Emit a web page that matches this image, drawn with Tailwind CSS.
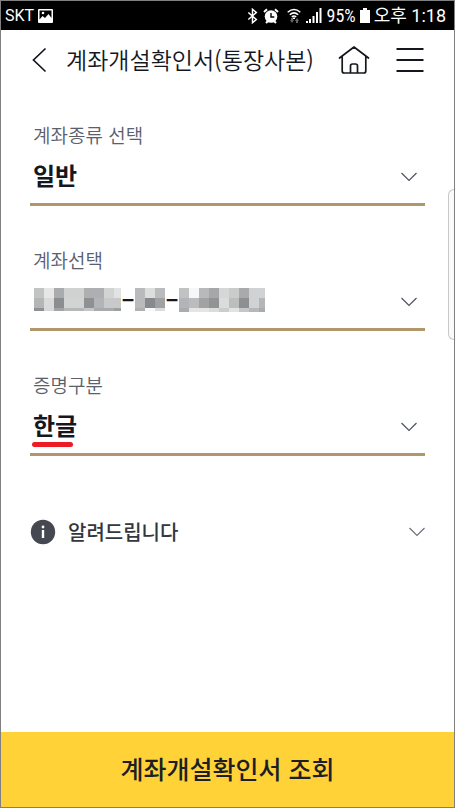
<!DOCTYPE html>
<html lang="ko">
<head>
<meta charset="utf-8">
<meta name="viewport" content="width=device-width, initial-scale=1">
<title>계좌개설확인서(통장사본)</title>
<script src="https://cdn.jsdelivr.net/npm/@tailwindcss/browser@4"></script>
</head>
<body class="bg-white font-['Noto_Sans_CJK_KR',sans-serif] text-[#15171e]">
<div class="relative flex min-h-screen flex-col border border-[#808080]">

  <!-- Status bar -->
  <div class="flex h-[29px] items-center bg-black pr-2 pl-1 font-[Roboto,'Noto_Sans_CJK_KR',sans-serif] text-white">
    <span class="text-[16px] leading-6">SKT</span>
    <svg class="ml-1 h-[14px] w-[15px]" viewBox="0 0 15 14" aria-hidden="true"><path fill="#fff" fill-rule="evenodd" d="M1 0h13a1 1 0 0 1 1 1v12a1 1 0 0 1-1 1H1a1 1 0 0 1-1-1V1a1 1 0 0 1 1-1zM1.500 1.500v9l3-3.500 2.500 2 3.500-4 3 4V1.500z"/><circle cx="5" cy="4" r="1.300" fill="#fff"/></svg>
    <div class="ml-auto flex items-center">
      <svg class="h-4 w-[11px]" viewBox="0 0 11 16" fill="none" stroke="#fff" stroke-width="1.500" aria-hidden="true"><path d="M1.300 4.500l8 7L5.500 14.700V1.300l3.800 3.200-8 7"/></svg>
      <svg class="ml-[5px] h-4 w-[16px]" viewBox="0 0 16 16" aria-hidden="true"><circle cx="8" cy="8.500" r="6.300" fill="#fff"/><path d="M1 4l3-2.700M15 4l-3-2.700M3 15l2-2M13 15l-2-2" stroke="#fff" stroke-width="2"/><path d="M8 5v4h3.300" fill="none" stroke="#000" stroke-width="1.400"/></svg>
      <svg class="ml-2 h-4 w-[14px]" viewBox="0 0 14 16" fill="none" stroke="#fff" stroke-width="1.500" aria-hidden="true"><path d="M.7 4.200Q7-1.200 13.300 4.200M2.800 6.700Q7 3 11.200 6.700M4.800 9Q7 7.200 9.200 9"/><path d="M7 9.500v1.500" stroke-width="2"/><path fill="#666" stroke="none" d="M3 12h1v-2h2v2h1l-2 3zM8 13l2-3 2 3h-1v2H9v-2z"/></svg>
      <svg class="ml-[5px] h-4 w-[16px]" viewBox="0 0 16 16" fill="#fff" aria-hidden="true"><path d="M0 13h2v2H0zM3 11h2v4H3zM6.500 8h2v7h-2zM10 4h2v11h-2zM13.500 0h2v15h-2z"/></svg>
      <span class="ml-[5px] font-['Roboto_Condensed',Roboto,sans-serif] text-[18px] leading-6">95%</span>
      <svg class="ml-1 h-[15px] w-[10px]" viewBox="0 0 10 15" fill="#fff" aria-hidden="true"><path d="M3 0h4v2h3v13H0V2h3z"/></svg>
      <span class="ml-1 text-[18px] leading-6">오후 1:18</span>
    </div>
  </div>

  <!-- Header -->
  <header class="flex h-[60px] items-center pr-[30px] pl-[30px]">
    <button type="button" aria-label="뒤로" class="flex h-8 w-[35px] shrink-0 items-center"><svg class="h-[26px] w-4" viewBox="0 0 16 26" fill="none" stroke="#15171e" stroke-width="1.700"><path d="M14.500 1.500L2.500 13l12 11.500"/></svg></button>
    <h1 class="pb-[2px] text-[23px] leading-8 font-[350] whitespace-nowrap">계좌개설확인서(통장사본)</h1>
    <a href="#" aria-label="홈" class="ml-auto"><svg class="h-[30px] w-8" viewBox="0 0 32 30" fill="none" stroke="#15171e" stroke-width="1.700" stroke-linejoin="round" stroke-linecap="round"><path d="M1.500 13L16 2l14.500 11M4.200 11.500V26a2 2 0 0 0 2 2h19.600a2 2 0 0 0 2-2V11.500M12.500 28v-7a2 2 0 0 1 2-2h3a2 2 0 0 1 2 2v7"/></svg></a>
    <button type="button" aria-label="메뉴" class="ml-[26px]"><svg class="block h-6 w-7" viewBox="0 0 28 24" fill="none" stroke="#15171e" stroke-width="2"><path d="M.5 1h27M.5 12h27M.5 23h27"/></svg></button>
  </header>

  <main class="flex flex-col gap-10 px-[29px] pt-[31px]">
    <div class="border-b-3 border-[#b0966a]">
      <label for="kind" class="block px-[3px] text-[19px] leading-7 font-[350] text-[#5a606c]">계좌종류 선택</label>
      <div class="relative flex h-[54px] items-center">
        <select id="kind" class="h-full w-full appearance-none bg-transparent px-[3px] pb-[2px] text-[24px] font-bold"><option>일반</option></select>
        <svg class="pointer-events-none absolute top-[23px] right-2 h-[10px] w-4" viewBox="0 0 16 10" fill="none" stroke="#4d535d" stroke-width="1.200"><path d="M.5 1L8 8.500 15.500 1"/></svg>
      </div>
    </div>

    <div class="border-b-3 border-[#b0966a]">
      <label for="account" class="block px-[3px] text-[19px] leading-7 font-[350] text-[#5a606c]">계좌선택</label>
      <div class="relative flex h-[54px] items-center px-[4px] pb-[2px]">
        <!-- Masked account number -->
        <svg class="h-6 w-[87px] shrink-0" viewBox="0 0 87 24" shape-rendering="crispEdges" aria-hidden="true">
          <path fill="#c2c3c3" d="M0 0h10v10H0z"/><path fill="#e6e6e6" d="M10 0h10v10H10z"/><path fill="#a9abac" d="M20 0h10v10H20z"/><path fill="#d0d2d2" d="M30 0h20v10H30z"/><path fill="#adafb0" d="M50 0h20v10H50z"/><path fill="#d2d4d4" d="M70 0h10v10H70z"/><path fill="#e0e3e2" d="M80 0h7v10h-7z"/>
          <path fill="#b3b5b7" d="M0 10h10v10H0z"/><path fill="#dadada" d="M10 10h10v10H10z"/><path fill="#8b8d8f" d="M20 10h10v10H20z"/><path fill="#d2d4d3" d="M30 10h20v10H30z"/><path fill="#8e9092" d="M50 10h10v10H50z"/><path fill="#b2b4b7" d="M60 10h10v10H60z"/><path fill="#c8caca" d="M70 10h17v10H70z"/>
          <path fill="#8e9091" d="M0 20h10v3H0z"/><path fill="#d8d8d8" d="M10 20h10v3H10z"/><path fill="#a1a3a4" d="M20 20h10v3H20z"/><path fill="#b6b7b8" d="M30 20h20v3H30z"/><path fill="#c5c6c7" d="M50 20h10v3H50z"/><path fill="#a8aaab" d="M60 20h20v3H60z"/><path fill="#9c9e9f" d="M80 20h7v3h-7z"/>
        </svg>
        <span class="w-[14px] pb-[6px] text-center text-[24px] leading-6 font-bold">–</span>
        <svg class="h-6 w-[30px] shrink-0" viewBox="0 0 30 24" shape-rendering="crispEdges" aria-hidden="true">
          <path fill="#b8babb" d="M0 0h10v20H0z"/><path fill="#dcdddc" d="M10 0h10v10H10z"/><path fill="#b9bbbc" d="M20 0h10v10H20z"/><path fill="#88898c" d="M10 10h10v10H10z"/><path fill="#a0a1a3" d="M20 10h10v10H20z"/><path fill="#aeb0b1" d="M0 20h10v3H0z"/><path fill="#f9f9f9" d="M10 20h10v3H10z"/><path fill="#dadbdb" d="M20 20h10v3H20z"/>
        </svg>
        <span class="w-[14px] pb-[6px] text-center text-[24px] leading-6 font-bold">–</span>
        <svg class="h-6 w-[86px] shrink-0" viewBox="0 0 86 24" shape-rendering="crispEdges" aria-hidden="true">
          <path fill="#c1c2c3" d="M0 0h10v10H0z"/><path fill="#f7f7f7" d="M10 0h10v10H10z"/><path fill="#b7b9bb" d="M20 0h10v10H20z"/><path fill="#a5a7a9" d="M30 0h10v10H30z"/><path fill="#d5d8d7" d="M40 0h10v10H40z"/><path fill="#c9cccb" d="M50 0h10v10H50z"/><path fill="#a8aaab" d="M60 0h10v10H60z"/><path fill="#d0d2d3" d="M70 0h16v20H70z"/>
          <path fill="#b2b4b7" d="M0 10h10v10H0z"/><path fill="#babcbe" d="M10 10h10v10H10z"/><path fill="#a1a2a4" d="M20 10h10v10H20z"/><path fill="#929395" d="M30 10h10v10H30z"/><path fill="#dbdcdc" d="M40 10h10v10H40z"/><path fill="#bcbebe" d="M50 10h10v10H50z"/><path fill="#8d8f91" d="M60 10h10v10H60z"/><path fill="#b4b6b8" d="M80 10h6v10h-6z"/>
          <path fill="#aaacad" d="M0 20h10v4H0z"/><path fill="#e5e5e5" d="M10 20h20v4H10z"/><path fill="#dbdcdc" d="M30 20h10v4H30z"/><path fill="#cbcdcd" d="M40 20h10v4H40z"/><path fill="#e1e2e2" d="M50 20h10v4H50z"/><path fill="#c5c6c7" d="M60 20h10v4H60z"/><path fill="#b5b7b8" d="M70 20h10v4H70z"/><path fill="#a9abac" d="M80 20h6v4h-6z"/>
        </svg>
        <select id="account" class="absolute inset-0 appearance-none bg-transparent"><option value="1" aria-label="선택한 계좌"></option></select>
        <svg class="pointer-events-none absolute top-[23px] right-2 h-[10px] w-4" viewBox="0 0 16 10" fill="none" stroke="#4d535d" stroke-width="1.200"><path d="M.5 1L8 8.500 15.500 1"/></svg>
      </div>
    </div>

    <div class="border-b-3 border-[#b0966a]">
      <label for="lang" class="block px-[3px] text-[19px] leading-7 font-[350] text-[#5a606c]">증명구분</label>
      <div class="relative flex h-[54px] items-center">
        <select id="lang" class="h-full w-full appearance-none bg-transparent px-[3px] pb-[2px] text-[24px] font-bold"><option>한글</option></select>
        <span class="pointer-events-none absolute bottom-[6px] left-[2px] h-[5px] w-[41px] rounded-full bg-[#ed1c24]"></span>
        <svg class="pointer-events-none absolute top-[23px] right-2 h-[10px] w-4" viewBox="0 0 16 10" fill="none" stroke="#4d535d" stroke-width="1.200"><path d="M.5 1L8 8.500 15.500 1"/></svg>
      </div>
    </div>
  </main>

  <button type="button" aria-expanded="false" class="mx-[29px] mt-[60px] mb-8 flex items-center text-left text-[20px] leading-8 font-medium text-[#333740]">
    <svg class="mr-3 h-[26px] w-[26px]" viewBox="0 0 26 26" aria-hidden="true"><circle cx="13" cy="13" r="12.200" fill="#454851"/><circle cx="13" cy="8" r="1.400" fill="#fff"/><path d="M13 11v8" stroke="#fff" stroke-width="2.400"/></svg>
    알려드립니다
    <svg class="ml-auto h-[10px] w-4" viewBox="0 0 16 10" fill="none" stroke="#6c717d" stroke-width="1.200" aria-hidden="true"><path d="M.5 1L8 8.500 15.500 1"/></svg>
  </button>

  <button type="button" class="mt-auto h-[75px] w-full bg-[#ffd338] pb-1 text-[25px] leading-8 font-medium text-[#1c1f26]">계좌개설확인서 조회</button>

  <!-- Side handle -->
  <div class="absolute top-[188px] right-0 h-[151px] w-[6px] rounded-l-md border border-r-0 border-[#c8c8c8] bg-[#fafafc]"></div>
</div>
</body>
</html>
